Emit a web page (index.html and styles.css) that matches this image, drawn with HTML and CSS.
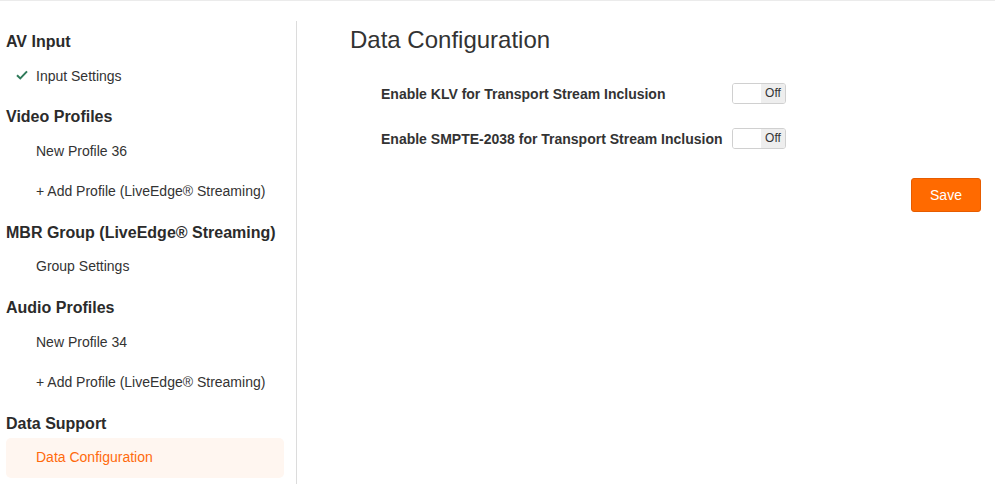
FILE: index.html
```html
<!DOCTYPE html>
<html>
<head>
<meta charset="utf-8">
<link rel="stylesheet" href="styles.css">
</head>
<body>
<div class="page">
  <nav class="sidebar">
    <div class="group-title">AV Input</div>
    <div class="item"><svg class="check" viewBox="0 0 12 10" width="12" height="10"><path d="M1 5.2 L4.3 8.4 L11 1.4" fill="none" stroke="#2f7a5a" stroke-width="2"/></svg>Input Settings</div>
    <div class="group-title">Video Profiles</div>
    <div class="item">New Profile 36</div>
    <div class="item">+ Add Profile (LiveEdge® Streaming)</div>
    <div class="group-title">MBR Group (LiveEdge® Streaming)</div>
    <div class="item">Group Settings</div>
    <div class="group-title">Audio Profiles</div>
    <div class="item">New Profile 34</div>
    <div class="item">+ Add Profile (LiveEdge® Streaming)</div>
    <div class="group-title">Data Support</div>
    <div class="item active">Data Configuration</div>
  </nav>
  <main class="content">
    <h1 class="title">Data Configuration</h1>
    <div class="fields">
      <div class="field">
        <span class="label">Enable KLV for Transport Stream Inclusion</span>
        <span class="toggle"><span class="knob"></span><span class="state">Off</span></span>
      </div>
      <div class="field">
        <span class="label">Enable SMPTE-2038 for Transport Stream Inclusion</span>
        <span class="toggle"><span class="knob"></span><span class="state">Off</span></span>
      </div>
    </div>
    <div class="actions"><button class="save">Save</button></div>
  </main>
</div>
</body>
</html>
```

FILE: styles.css
```css
html, body {
  margin: 0;
  padding: 0;
  background: #fff;
}
body {
  font-family: "Liberation Sans", Arial, sans-serif;
  color: #333;
  border-top: 1px solid #ebebeb;
  height: 483px;
  overflow: hidden;
}
.page {
  display: flex;
  padding-top: 20px;
  height: 463px;
}
.sidebar {
  width: 278px;
  padding: 0 12px 0 6px;
  border-right: 1px solid #dcdcdc;
  flex-shrink: 0;
}
.group-title {
  font-size: 16px;
  font-weight: bold;
  line-height: 20px;
  padding: 11px 0 4px 0;
  color: #2b2b2b;
}
.item {
  height: 40.25px;
  box-sizing: border-box;
  padding-bottom: 1px;
  display: flex;
  align-items: center;
  padding-left: 30px;
  font-size: 14px;
  color: #333;
  position: relative;
  border-radius: 5px;
}
.check {
  position: absolute;
  left: 10px;
  top: 14px;
}
.item.active {
  background: #fff6f0;
  color: #ff6a0c;
}
.content {
  flex: 1;
  padding-left: 53px;
  padding-right: 14px;
}
.title {
  font-size: 24px;
  font-weight: normal;
  margin: 5px 0 0 0;
  line-height: 28px;
  color: #333;
}
.fields {
  padding-left: 31px;
  margin-top: 29px;
}
.field {
  display: flex;
  align-items: center;
  height: 21px;
  margin-bottom: 24px;
}
.label {
  font-size: 14px;
  font-weight: bold;
  width: 351px;
  color: #333;
}
.toggle {
  display: flex;
  width: 52px;
  height: 19px;
  border: 1px solid #d0d0d0;
  border-radius: 3px;
  overflow: hidden;
}
.knob {
  width: 28px;
  background: #fff;
}
.state {
  flex: 1;
  background: #eeeeee;
  font-size: 12px;
  line-height: 19px;
  text-align: center;
  color: #333;
}
.actions {
  display: flex;
  justify-content: flex-end;
  margin-top: 29px;
}
.save {
  width: 70px;
  height: 34px;
  background: #ff6a00;
  border: 1px solid #e65c00;
  border-radius: 3px;
  color: #fff;
  font-family: "Liberation Sans", Arial, sans-serif;
  font-size: 14px;
  padding: 0;
}
```
